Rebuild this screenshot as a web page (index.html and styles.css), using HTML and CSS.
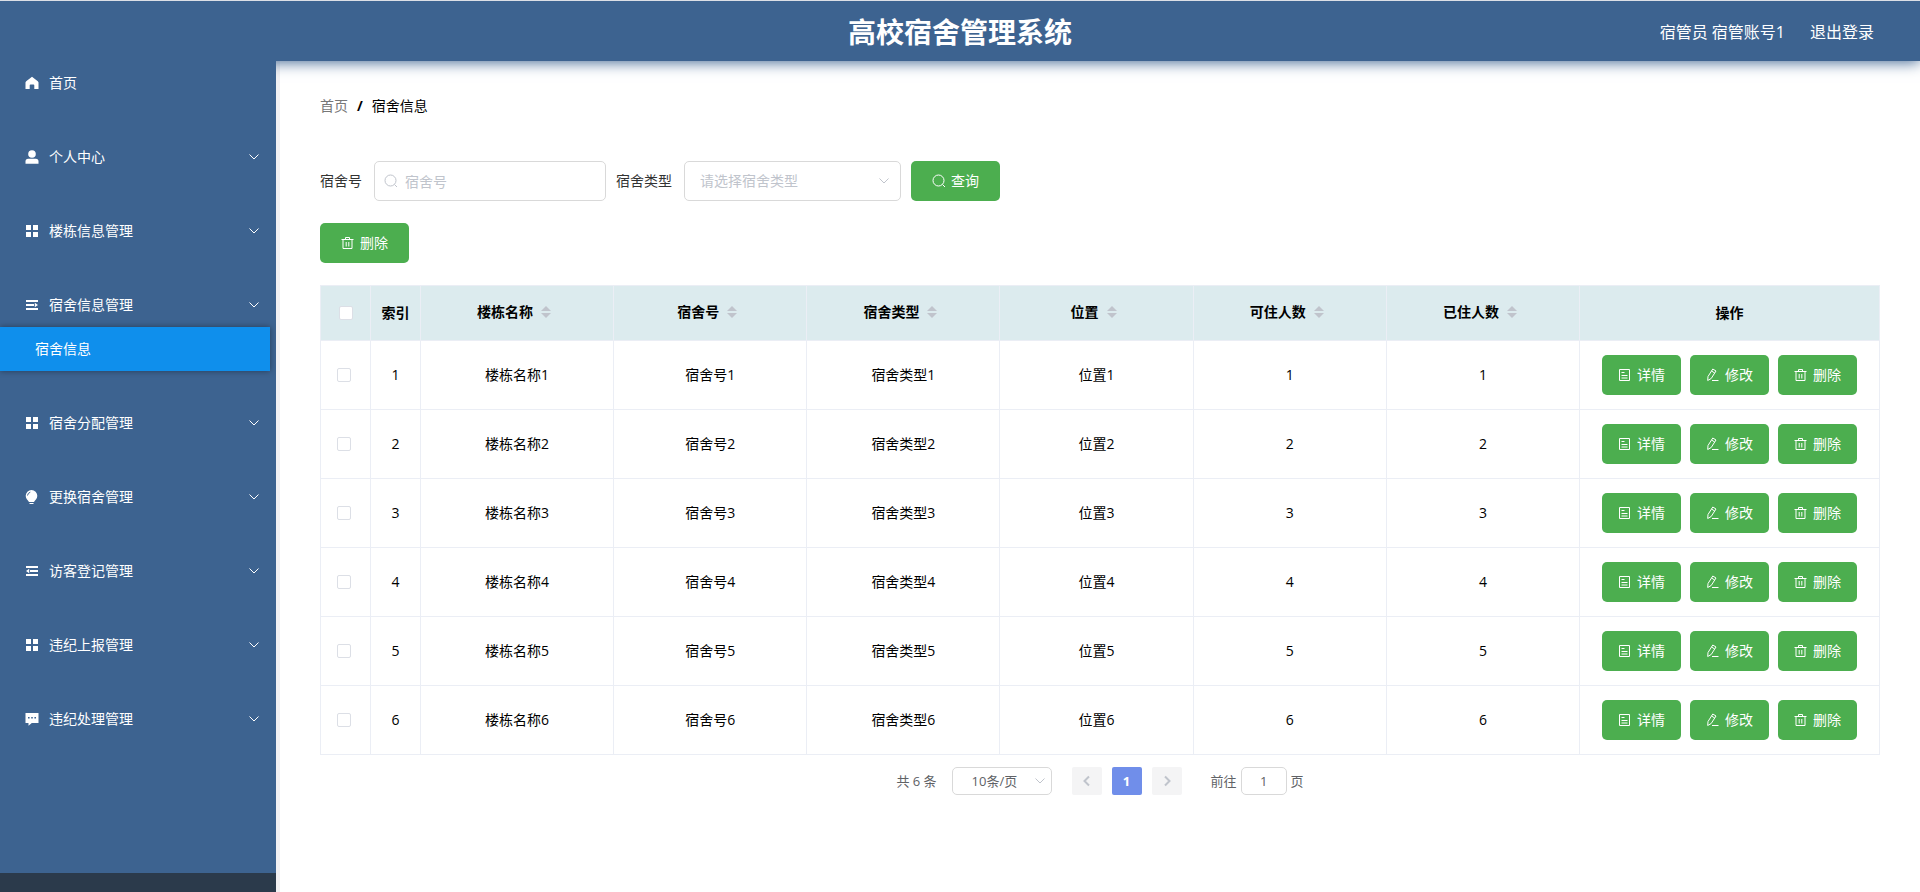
FILE: index.html
```html
<!DOCTYPE html>
<html lang="zh-CN">
<head>
  <meta charset="UTF-8">
  <meta name="viewport" content="width=device-width, initial-scale=1.0">
  <title>高校宿舍管理系统</title>
  <link rel="stylesheet" href="styles.css">
</head>
<body>
<svg class="sprite" aria-hidden="true">
  <symbol id="home" viewBox="0 0 14 14"><path d="M7 .8 1.2 5.2Q.5 5.8.5 6.6V13h4.2V9.4q0-.8.8-.8h3q.8 0 .8.8V13h4.2V6.6q0-.8-.7-1.4z"/></symbol>
  <symbol id="user" viewBox="0 0 14 14"><circle cx="7" cy="4" r="3.8"/><path d="M.5 13.8v-2.3q0-2.7 2.7-2.7h7.6q2.7 0 2.7 2.7v2.3z"/></symbol>
  <symbol id="menu" viewBox="0 0 14 14"><path d="M1 1h5v5H1zM8 1h5v5H8zM1 8h5v5H1zM8 8h5v5H8z"/></symbol>
  <symbol id="unfold" viewBox="0 0 14 14"><path d="M1 2h12v2H1zM1 6h8v2H1zM1 10h12v2H1zM9.8 4.8 13 7 9.800 9.200z"/></symbol>
  <symbol id="fold" viewBox="0 0 14 14"><path d="M1 2h12v2H1zM5 6h8v2H5zM1 10h12v2H1zM4.200 4.800 1 7l3.200 2.200z"/></symbol>
  <symbol id="bulb" viewBox="0 0 14 14"><path d="M6.5 0A5.8 5.8 0 0 0 .7 5.8c0 3 2 4 3.300 6.200h5c1.300-2.200 3.300-3.200 3.300-6.200A5.8 5.8 0 0 0 6.500 0zM4.500 13h4v1h-4z"/><path class="bulb-shine" d="M2.500 5.500q.3-2.500 2.800-3.300"/></symbol>
  <symbol id="chat" viewBox="0 0 14 14"><path fill-rule="evenodd" d="M.5 1h13v10H6.800L3.500 13.800V11h-3zM3 5v1.600h1.600V5zm3.200 0v1.600h1.600V5zm3.200 0v1.600H11V5z"/></symbol>
  <symbol id="down" viewBox="0 0 12 12"><path class="line" d="M1.500 3.500 6 8l4.500-4.500"/></symbol>
  <symbol id="left" viewBox="0 0 12 12"><path class="line" d="M8 1.500 3.500 6 8 10.500"/></symbol>
  <symbol id="right" viewBox="0 0 12 12"><path class="line" d="M4 1.500 8.500 6 4 10.500"/></symbol>
  <symbol id="search" viewBox="0 0 14 14"><circle class="line" cx="6.500" cy="6.500" r="5.500"/><path class="line" d="m10.500 10.500 2.500 2.500"/></symbol>
  <symbol id="trash" viewBox="0 0 14 14"><path class="line" d="M.5 3.500h12M4.500 3.500v-2h4v2M2 3.500v9h9v-9M5.200 6v4.500M7.800 6v4.500"/></symbol>
  <symbol id="doc" viewBox="0 0 14 14"><path class="line" d="M1.500 1.500h10v11h-10zM3.500 4.500h3M3.500 7.500h6M3.500 10h6"/></symbol>
  <symbol id="edit" viewBox="0 0 14 14"><path class="line" d="M2 8.500 6.800 1l3.200 2-4.800 7.500-3.500 2zM5.500 3l3.200 2M6 12.500h6.500"/></symbol>
</svg>

<header class="header">
  <h1>高校宿舍管理系统</h1>
  <div class="header-right">
    <span>宿管员 宿管账号1</span>
    <a href="#">退出登录</a>
  </div>
</header>

<div class="layout">
  <aside class="sidebar">
    <nav class="menu">
      <a class="menu-item" href="#"><svg class="icon"><use href="#home"/></svg>首页</a>
      <button class="menu-item"><svg class="icon"><use href="#user"/></svg>个人中心<svg class="arrow"><use href="#down"/></svg></button>
      <button class="menu-item"><svg class="icon"><use href="#menu"/></svg>楼栋信息管理<svg class="arrow"><use href="#down"/></svg></button>
      <div class="menu-group">
        <button class="menu-item"><svg class="icon"><use href="#unfold"/></svg>宿舍信息管理<svg class="arrow"><use href="#down"/></svg></button>
        <a class="sub-item" href="#">宿舍信息</a>
      </div>
      <button class="menu-item"><svg class="icon"><use href="#menu"/></svg>宿舍分配管理<svg class="arrow"><use href="#down"/></svg></button>
      <button class="menu-item"><svg class="icon"><use href="#bulb"/></svg>更换宿舍管理<svg class="arrow"><use href="#down"/></svg></button>
      <button class="menu-item"><svg class="icon"><use href="#fold"/></svg>访客登记管理<svg class="arrow"><use href="#down"/></svg></button>
      <button class="menu-item"><svg class="icon"><use href="#menu"/></svg>违纪上报管理<svg class="arrow"><use href="#down"/></svg></button>
      <button class="menu-item"><svg class="icon"><use href="#chat"/></svg>违纪处理管理<svg class="arrow"><use href="#down"/></svg></button>
    </nav>
  </aside>

  <main class="content">
    <div class="breadcrumb">
      <a href="#">首页</a><b>/</b><span>宿舍信息</span>
    </div>

    <form class="search-form">
      <label for="room">宿舍号</label>
      <div class="field room-field">
        <svg class="icon"><use href="#search"/></svg>
        <input id="room" type="text" placeholder="宿舍号">
      </div>
      <label for="type">宿舍类型</label>
      <div class="field type-field">
        <select id="type">
          <option>请选择宿舍类型</option>
          <option>宿舍类型1</option>
          <option>宿舍类型2</option>
        </select>
        <svg class="arrow"><use href="#down"/></svg>
      </div>
      <button class="btn" type="button"><svg class="icon"><use href="#search"/></svg>查询</button>
    </form>

    <button class="btn" type="button"><svg class="icon"><use href="#trash"/></svg>删除</button>

    <table class="table">
      <colgroup>
        <col class="col-small"><col class="col-small">
        <col><col><col><col><col><col>
        <col class="col-actions">
      </colgroup>
      <thead>
        <tr>
          <th><input type="checkbox" aria-label="全选"></th>
          <th>索引</th>
          <th><span class="sortable">楼栋名称<i class="sort"></i></span></th>
          <th><span class="sortable">宿舍号<i class="sort"></i></span></th>
          <th><span class="sortable">宿舍类型<i class="sort"></i></span></th>
          <th><span class="sortable">位置<i class="sort"></i></span></th>
          <th><span class="sortable">可住人数<i class="sort"></i></span></th>
          <th><span class="sortable">已住人数<i class="sort"></i></span></th>
          <th>操作</th>
        </tr>
      </thead>
      <tbody class="rows"></tbody>
    </table>

    <div class="pagination">
      <span class="total">共 6 条</span>
      <div class="field size-field">
        <select aria-label="每页条数">
          <option>10条/页</option>
          <option>20条/页</option>
        </select>
        <svg class="arrow"><use href="#down"/></svg>
      </div>
      <div class="pager">
        <button aria-label="上一页" disabled><svg><use href="#left"/></svg></button>
        <button class="active">1</button>
        <button aria-label="下一页" disabled><svg><use href="#right"/></svg></button>
      </div>
      <label class="jump">前往<input type="text" value="1">页</label>
    </div>
  </main>
</div>

<script>
  const rows = [1, 2, 3, 4, 5, 6];

  document.querySelector('.rows').innerHTML = rows.map(n => `
    <tr>
      <td><input type="checkbox" aria-label="选择第${n}行"></td>
      <td>${n}</td>
      <td>楼栋名称${n}</td>
      <td>宿舍号${n}</td>
      <td>宿舍类型${n}</td>
      <td>位置${n}</td>
      <td>${n}</td>
      <td>${n}</td>
      <td>
        <div class="actions">
          <button class="btn btn-row"><svg class="icon"><use href="#doc"/></svg>详情</button>
          <button class="btn btn-row"><svg class="icon"><use href="#edit"/></svg>修改</button>
          <button class="btn btn-row"><svg class="icon"><use href="#trash"/></svg>删除</button>
        </div>
      </td>
    </tr>`).join('');
</script>
</body>
</html>
```

FILE: styles.css
```css
* {
  box-sizing: border-box;
}
body {
  margin: 0;
  min-height: 100vh;
  display: flex;
  flex-direction: column;
  border-top: 1px solid #dcdfe6;
  background: #fff;
  color: #000;
  font: 14px/20px "Open Sans", "Noto Sans CJK SC", sans-serif;
}
a {
  color: inherit;
  text-decoration: none;
}
button, input, select {
  font: inherit;
  color: inherit;
}
button {
  border: none;
  cursor: pointer;
}
svg {
  fill: currentColor;
  flex: none;
}
.sprite {
  position: absolute;
  width: 0;
  height: 0;
}
.line {
  fill: none;
  stroke: currentColor;
}
.bulb-shine {
  fill: none;
  stroke: #3d6390;
}
.icon {
  width: 14px;
  height: 14px;
}
.arrow {
  width: 12px;
  height: 12px;
}

/* header */
.header {
  position: relative;
  z-index: 1;
  height: 60px;
  padding: 2px 46px 0;
  display: grid;
  grid-template-columns: 1fr auto 1fr;
  align-items: center;
  background: #3d6390;
  box-shadow: 0 1px 14px #3d6390;
  color: #fff;
}
.header h1 {
  grid-column: 2;
  margin: 0;
  font-size: 28px;
  line-height: 40px;
}
.header-right {
  display: flex;
  justify-content: flex-end;
  gap: 25px;
  font-size: 16px;
}

/* sidebar */
.layout {
  flex: 1;
  display: flex;
}
.sidebar {
  position: relative;
  z-index: 2;
  width: 276px;
  flex: none;
  display: flex;
  padding-bottom: 19px;
  background: #2b3a4b;
}
.menu {
  flex: 1;
  display: flex;
  flex-direction: column;
  gap: 30px;
  background: #3d6390;
  color: #fff;
}
.menu-item {
  width: 100%;
  height: 44px;
  padding: 0 16px 0 25px;
  display: flex;
  align-items: center;
  gap: 10px;
  background: none;
}
.menu-item .arrow {
  margin-left: auto;
}
.sub-item {
  display: block;
  width: 270px;
  padding: 12px 35px;
  background: #0f8fec;
  box-shadow: 0 0 6px rgba(0, 0, 0, .4);
}

/* content */
.content {
  flex: 1;
  min-width: 0;
  padding: 35px 40px 20px;
  border-left: 4px solid #f2f1f3;
}
.breadcrumb {
  display: flex;
  gap: 9px;
  margin-bottom: 45px;
}
.breadcrumb a {
  color: #777;
}
.search-form {
  display: flex;
  align-items: center;
  margin-bottom: 22px;
}
.search-form label {
  color: #333;
  margin-right: 12px;
}
.field {
  position: relative;
  display: flex;
  align-items: center;
  margin-right: 10px;
  color: #c0c4cc;
}
.field input, .field select {
  width: 100%;
  height: 40px;
  border: 1px solid #d9d9d9;
  border-radius: 5px;
  background: none;
  appearance: none;
  outline: none;
}
.field input::placeholder {
  color: #c0c4cc;
}
.field .icon {
  position: absolute;
  left: 10px;
}
.field .arrow {
  position: absolute;
  right: 11px;
  pointer-events: none;
}
.room-field {
  width: 232px;
}
.room-field input {
  padding: 0 30px;
}
.type-field {
  width: 217px;
}
.type-field select {
  padding: 0 15px;
}
.btn {
  width: 89px;
  height: 40px;
  padding: 0;
  display: flex;
  align-items: center;
  justify-content: center;
  gap: 5px;
  border-radius: 5px;
  background: #4cae4f;
  color: #fff;
}

/* table */
.table {
  width: 100%;
  margin-top: 22px;
  table-layout: fixed;
  border-collapse: collapse;
}
.table th, .table td {
  padding: 0;
  border: 1px solid #ebeef5;
  text-align: center;
}
.table th {
  height: 55px;
  background: #dcebee;
}
.table td {
  height: 69px;
}
.col-small {
  width: 50px;
}
.col-actions {
  width: 300px;
}
.table input {
  display: block;
  width: 14px;
  height: 14px;
  margin: 0 0 0 16px;
  appearance: none;
  border: 1px solid #dcdfe6;
  border-radius: 2px;
  background: #fff;
}
.table th input {
  margin-left: 18px;
}
.sortable {
  display: inline-flex;
  align-items: center;
  gap: 8px;
  padding: 0 6px 3px 0;
}
.sort {
  display: grid;
  gap: 2px;
}
.sort::before, .sort::after {
  content: "";
  border: 5px solid transparent;
}
.sort::before {
  border-top: 0;
  border-bottom-color: #c0c4cc;
}
.sort::after {
  border-bottom: 0;
  border-top-color: #c0c4cc;
}
.actions {
  display: flex;
  justify-content: center;
  gap: 9px;
}
.btn-row {
  width: 79px;
}

/* pagination */
.pagination {
  display: flex;
  justify-content: center;
  align-items: center;
  margin-top: 12px;
  color: #606266;
  font-size: 13px;
}
.total {
  margin-right: 15px;
}
.size-field {
  width: 100px;
  margin-right: 20px;
}
.size-field select {
  height: 28px;
  padding: 0 19px;
  color: #606266;
}
.size-field .arrow {
  right: 6px;
}
.pager {
  display: flex;
  gap: 10px;
  margin-right: 29px;
}
.pager button {
  width: 30px;
  height: 28px;
  padding: 0;
  display: grid;
  place-items: center;
  border-radius: 2px;
  background: #f4f4f5;
  color: #c0c4cc;
}
.pager .active {
  background: #708eea;
  color: #fff;
  font-weight: bold;
}
.pager svg {
  width: 12px;
  height: 12px;
  stroke-width: 2;
}
.jump input {
  width: 46px;
  height: 28px;
  margin: 0 4px;
  padding: 0;
  border: 1px solid #d9d9d9;
  border-radius: 5px;
  text-align: center;
}
```
